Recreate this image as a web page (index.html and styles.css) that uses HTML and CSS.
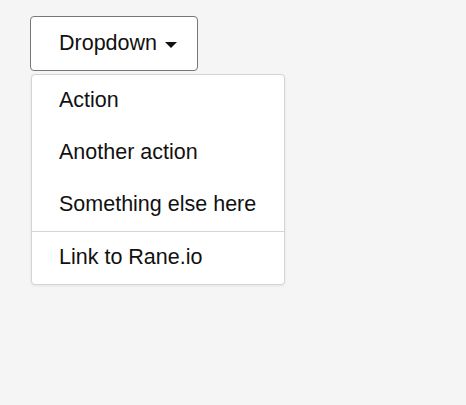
FILE: index.html
```html
<!DOCTYPE html>
<html lang="en">
<head>
    <meta charset="UTF-8">
    <meta name="viewport" content="width=device-width, initial-scale=1.0">
    <title>Dropdown</title>
    <link rel="stylesheet" href="styles.css">
</head>
<body>

    <div class="dropdown">
        <button class="dropdown-toggle">Dropdown <span class="caret"></span></button>
        <ul class="dropdown-menu">
            <li><a href="#">Action</a></li>
            <li><a href="#">Another action</a></li>
            <li><a href="#">Something else here</a></li>
            <li class="divider"></li>
            <li><a href="#">Link to Rane.io</a></li>
        </ul>
    </div>

</body>
</html>
```

FILE: styles.css
```css
body {
    margin: 0;
    padding: 16px 30px;
    background: #f5f5f5;
    font-family: "Liberation Sans", Arial, sans-serif;
    color: #111;
}
.dropdown {
    display: inline-block;
}
.dropdown-toggle {
    display: flex;
    align-items: center;
    gap: 8px;
    height: 55px;
    padding: 0 20px 0 28px;
    background: white;
    border: 1px solid #777;
    border-radius: 4px;
    font-family: inherit;
    font-size: 21.5px;
    color: #111;
    cursor: pointer;
}
.caret {
    width: 0;
    height: 0;
    border-left: 6px solid transparent;
    border-right: 6px solid transparent;
    border-top: 6px solid #111;
    margin-top: 2px;
}
.dropdown-menu {
    list-style: none;
    margin: 3px 0 0 1px;
    padding: 0;
    width: 252px;
    background: white;
    border: 1px solid #d4d4d4;
    border-radius: 4px;
    box-shadow: 0 1px 3px rgba(0, 0, 0, 0.08);
}
.dropdown-menu a {
    display: block;
    padding: 12px 27px 14px;
    font-size: 21.5px;
    line-height: 26px;
    color: #111;
    text-decoration: none;
}
.divider {
    height: 1px;
    background: #d4d4d4;
}
```
